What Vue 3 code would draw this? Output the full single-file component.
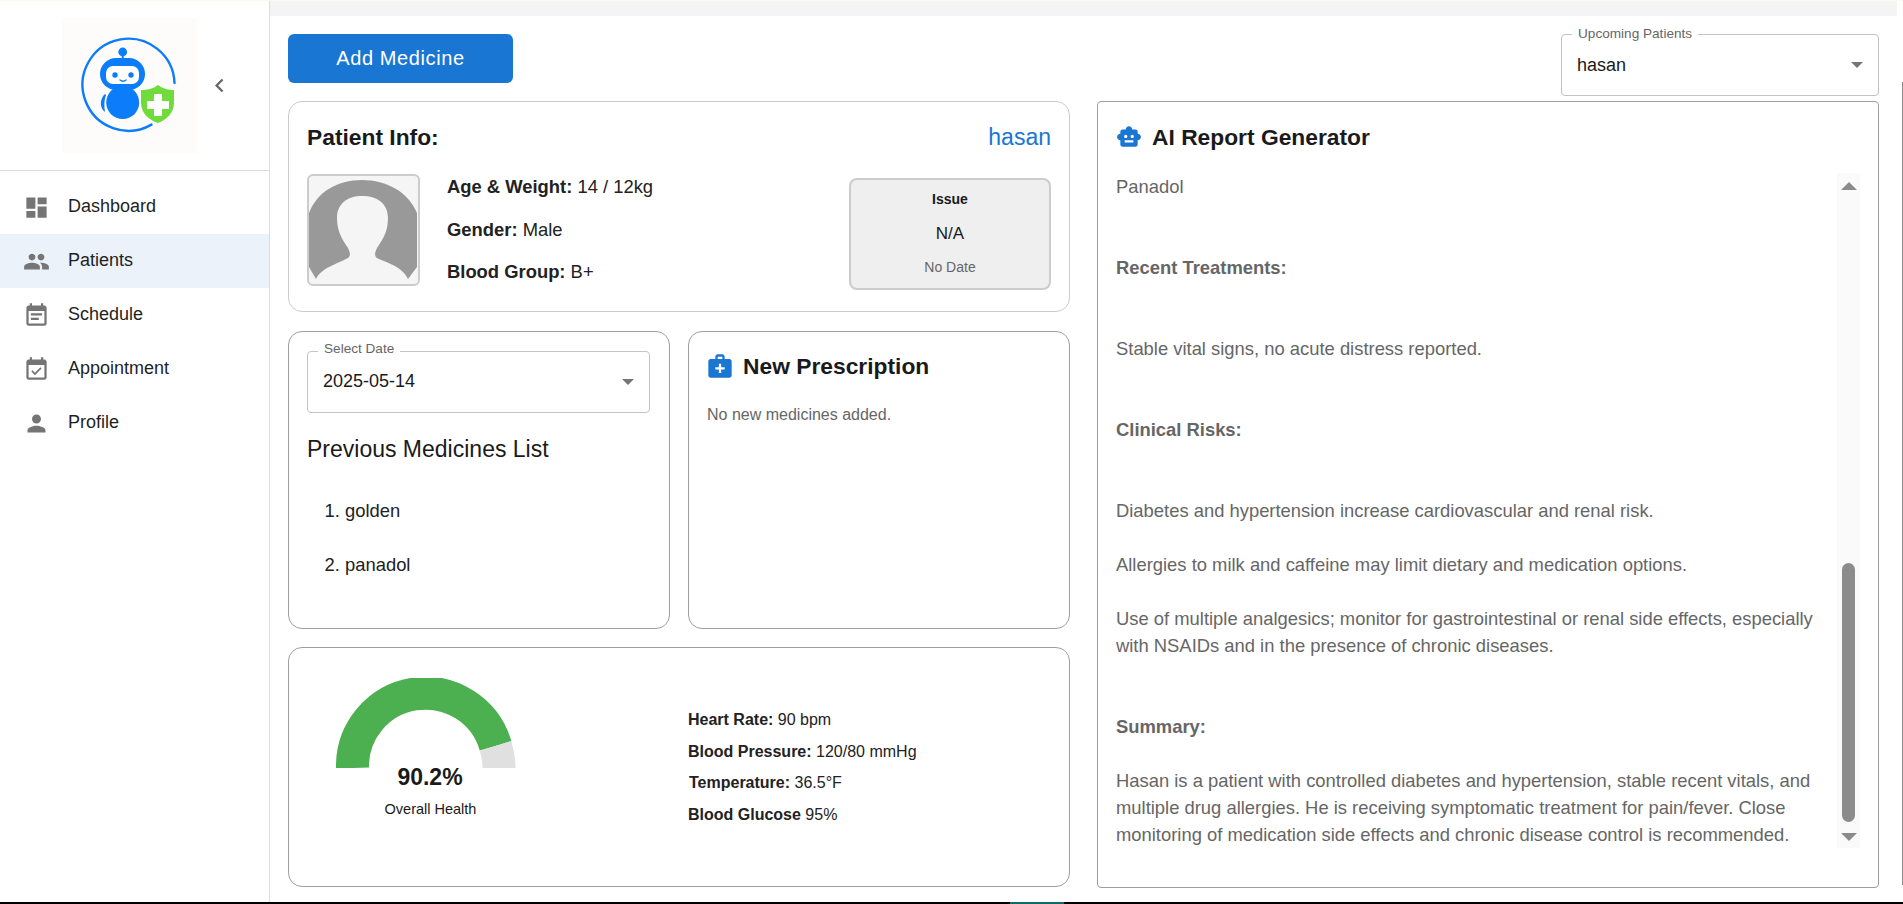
<template>
  <div class="page">
    <div class="top-line"></div>
    <div class="shell">
      <aside class="sidebar">
        <div class="brand">
          <svg class="logo" viewBox="62 18 135 135" width="135" height="135">
            <rect x="62" y="18" width="135" height="135" fill="#fdfcfa" />
            <path d="M151.5 124.6 A46 46 0 1 1 174.5 83" fill="none" stroke="#0b7cfa" stroke-width="2.4" stroke-linecap="round" />
            <circle cx="122.7" cy="52" r="4.4" fill="#0b7cfa" />
            <rect x="121.7" y="54" width="2" height="8" fill="#0b7cfa" />
            <rect x="100" y="58" width="45" height="32" rx="16" fill="#0b7cfa" />
            <circle cx="122.7" cy="102.5" r="16.5" fill="#0b7cfa" />
            <path d="M105 94 C100 98 99 108 105 112 C104 106 104 100 106 95 Z" fill="#0b7cfa" />
            <rect x="106" y="66" width="33" height="18" rx="7" fill="#fff" />
            <circle cx="115" cy="75" r="2.7" fill="#0b7cfa" />
            <circle cx="131" cy="75" r="2.7" fill="#0b7cfa" />
            <path d="M120 80 Q123 82.5 126 80" fill="none" stroke="#0b7cfa" stroke-width="1.4" stroke-linecap="round" />
            <path d="M158 85 C163 89 169 90 174 90 L174 103 C174 113 166 120 158 123 C149 120 141 113 141 103 L141 90 C147 90 153 89 158 85 Z" fill="#6fdc3c" />
            <path d="M154 94 h8 v7 h7 v8 h-7 v7 h-8 v-7 h-7 v-8 h7 Z" fill="#fff" />
          </svg>
          <svg class="collapse" viewBox="0 0 24 24" width="27" height="27"><path d="M15.41 7.41 14 6l-6 6 6 6 1.41-1.41L10.83 12z" /></svg>
        </div>
        <nav class="nav">
          <div v-for="item in navItems" :key="item.label" :class="['nav-item', { active: item.label === 'Patients' }]">
            <svg viewBox="0 0 24 24" width="27" height="27"><path :d="item.icon" /></svg>
            <span>{{ item.label }}</span>
          </div>
        </nav>
      </aside>

      <main class="main">
        <div class="top-strip"></div>
        <div class="content">
          <div class="toolbar">
            <button class="btn-add">Add Medicine</button>
            <div class="select upcoming">
              <span class="select-label">Upcoming Patients</span>
              <span class="select-value">hasan</span>
              <span class="caret"></span>
            </div>
          </div>

          <div class="columns">
            <div class="left-col">
              <section class="card patient-card">
                <div class="patient-head">
                  <h2>Patient Info:</h2>
                  <span class="patient-name">hasan</span>
                </div>
                <div class="patient-body">
                  <div class="avatar">
                    <svg viewBox="0 0 109 108" width="109" height="108">
                      <path d="M0 37 C8 16 28 4 53 4 C78 4 99 16 108 37 L108 91 L99 103 L7 103 L0 91 Z" fill="#999" />
                      <path d="M7 103 C12 92 28 88 39 82 C42 80 41 76 39 72 C32 62 28 54 28 42 C28 28 38 20 53 20 C69 20 79 28 79 42 C79 54 75 62 68 72 C66 76 65 80 68 82 C78 87 93 90 99 103 L99 108 L7 108 Z" fill="#f5f5f5" />
                    </svg>
                  </div>
                  <div class="patient-details">
                    <p><b>Age &amp; Weight:</b> 14 / 12kg</p>
                    <p><b>Gender:</b> Male</p>
                    <p><b>Blood Group:</b> B+</p>
                  </div>
                  <div class="issue-box">
                    <div class="issue-title">Issue</div>
                    <div class="issue-value">N/A</div>
                    <div class="issue-date">No Date</div>
                  </div>
                </div>
              </section>

              <div class="middle-row">
                <section class="card dark date-card">
                  <div class="select date-select">
                    <span class="select-label">Select Date</span>
                    <span class="select-value">2025-05-14</span>
                    <span class="caret"></span>
                  </div>
                  <h3>Previous Medicines List</h3>
                  <ol class="med-list">
                    <li>golden</li>
                    <li>panadol</li>
                  </ol>
                </section>
                <section class="card dark rx-card">
                  <div class="rx-head">
                    <svg viewBox="0 0 24 24" width="28" height="28"><path d="M20 6h-4V4c0-1.1-.9-2-2-2h-4c-1.1 0-2 .9-2 2v2H4c-1.1 0-2 .9-2 2v12c0 1.1.9 2 2 2h16c1.1 0 2-.9 2-2V8c0-1.1-.9-2-2-2zM10 4h4v2h-4V4zm6 11h-3v3h-2v-3H8v-2h3v-3h2v3h3v2z" /></svg>
                    <h2>New Prescription</h2>
                  </div>
                  <p class="rx-empty">No new medicines added.</p>
                </section>
              </div>

              <section class="card dark health-card">
                <div class="gauge">
                  <svg viewBox="0 0 180 90" width="180" height="90">
                    <path d="M16.5 90 A73 73 0 0 1 159.6 67.9" fill="none" stroke="#4caf50" stroke-width="33" />
                    <path d="M159.6 67.9 A73 73 0 0 1 163 90" fill="none" stroke="#e0e0e0" stroke-width="33" />
                  </svg>
                  <div class="gauge-value">90.2%</div>
                  <div class="gauge-label">Overall Health</div>
                </div>
                <div class="vitals">
                  <p v-for="v in vitals" :key="v.label"><b>{{ v.label }}</b> {{ v.value }}</p>
                </div>
              </section>
            </div>

            <section class="card dark ai-card">
              <div class="ai-head">
                <svg viewBox="0 0 24 24" width="26" height="26"><path d="M20 9V7c0-1.1-.9-2-2-2h-3c0-1.66-1.34-3-3-3S9 3.34 9 5H6c-1.1 0-2 .9-2 2v2c-1.66 0-3 1.34-3 3s1.34 3 3 3v4c0 1.1.9 2 2 2h12c1.1 0 2-.9 2-2v-4c1.66 0 3-1.34 3-3s-1.34-3-3-3zM7.5 11.5c0-.83.67-1.5 1.5-1.5s1.5.67 1.5 1.5S9.83 13 9 13s-1.5-.67-1.5-1.5zM16 17H8v-2h8v2zm-1-4c-.83 0-1.5-.67-1.5-1.5S14.17 10 15 10s1.5.67 1.5 1.5S15.83 13 15 13z" /></svg>
                <h2>AI Report Generator</h2>
              </div>
              <div class="ai-body">
                <div class="ai-text">
                  <p v-for="(line, i) in report" :key="i" :class="[line.gap, { heading: line.heading }]">{{ line.text }}</p>
                </div>
                <div class="scrollbar">
                  <span class="arrow up"></span>
                  <span class="thumb"></span>
                  <span class="arrow down"></span>
                </div>
              </div>
            </section>
          </div>
        </div>
      </main>
    </div>
    <div class="bottom-bar"><span class="bottom-accent"></span></div>
    <span class="page-rail"></span>
  </div>
</template>

<script setup>
const navItems = [
  { label: 'Dashboard', icon: 'M3 13h8V3H3v10zm0 8h8v-6H3v6zm10 0h8V11h-8v10zm0-18v6h8V3h-8z' },
  { label: 'Patients', icon: 'M16 11c1.66 0 2.99-1.34 2.99-3S17.66 5 16 5c-1.66 0-3 1.34-3 3s1.34 3 3 3zm-8 0c1.66 0 2.99-1.34 2.99-3S9.66 5 8 5C6.34 5 5 6.34 5 8s1.34 3 3 3zm0 2c-2.33 0-7 1.17-7 3.5V19h14v-2.5c0-2.33-4.67-3.5-7-3.5zm8 0c-.29 0-.62.02-.97.05 1.16.84 1.97 1.97 1.97 3.45V19h6v-2.5c0-2.33-4.67-3.5-7-3.5z' },
  { label: 'Schedule', icon: 'M17 10H7v2h10v-2zm2-7h-1V1h-2v2H8V1H6v2H5c-1.11 0-1.99.9-1.99 2L3 19c0 1.1.89 2 2 2h14c1.1 0 2-.9 2-2V5c0-1.1-.9-2-2-2zm0 16H5V8h14v11zm-5-5H7v2h7v-2z' },
  { label: 'Appointment', icon: 'M16.53 11.06L15.47 10l-4.88 4.88-2.12-2.12-1.06 1.06L10.59 17l5.94-5.94zM19 3h-1V1h-2v2H8V1H6v2H5c-1.11 0-1.99.9-1.99 2L3 19c0 1.1.89 2 2 2h14c1.1 0 2-.9 2-2V5c0-1.1-.9-2-2-2zm0 16H5V8h14v11z' },
  { label: 'Profile', icon: 'M12 12c2.21 0 4-1.79 4-4s-1.79-4-4-4-4 1.79-4 4 1.79 4 4 4zm0 2c-2.67 0-8 1.34-8 4v2h16v-2c0-2.66-5.33-4-8-4z' },
]

const vitals = [
  { label: 'Heart Rate:', value: '90 bpm' },
  { label: 'Blood Pressure:', value: '120/80 mmHg' },
  { label: 'Temperature:', value: '36.5°F' },
  { label: 'Blood Glucose', value: '95%' },
]

const report = [
  { text: 'Panadol', gap: 'gap-2' },
  { text: 'Recent Treatments:', gap: 'gap-2', heading: true },
  { text: 'Stable vital signs, no acute distress reported.', gap: 'gap-2' },
  { text: 'Clinical Risks:', gap: 'gap-2', heading: true },
  { text: 'Diabetes and hypertension increase cardiovascular and renal risk.', gap: 'gap-1' },
  { text: 'Allergies to milk and caffeine may limit dietary and medication options.', gap: 'gap-1' },
  { text: 'Use of multiple analgesics; monitor for gastrointestinal or renal side effects, especially with NSAIDs and in the presence of chronic diseases.', gap: 'gap-2' },
  { text: 'Summary:', gap: 'gap-1', heading: true },
  { text: 'Hasan is a patient with controlled diabetes and hypertension, stable recent vitals, and multiple drug allergies. He is receiving symptomatic treatment for pain/fever. Close monitoring of medication side effects and chronic disease control is recommended.', gap: 'gap-0' },
]
</script>

<style>
html, body { margin: 0; background: #fff; overflow: hidden; }
</style>

<style scoped>
.page { position: relative; width: 1903px; height: 904px; display: flex; flex-direction: column; overflow: hidden; font-family: "Liberation Sans", Arial, sans-serif; color: #1a1a1a; background: #fff; }
.top-line { height: 1px; background: #fff8ec; flex: none; }
.shell { flex: 1; display: flex; min-height: 0; }
.bottom-bar { height: 2px; background: #000; flex: none; padding-left: 1010px; }
.bottom-accent { display: block; width: 54px; height: 2px; background: #0f6b66; }
.page-rail { position: absolute; right: 0; top: 82px; width: 1px; height: 803px; background: #8b8b8b; }

.sidebar { width: 269px; flex: none; border-right: 1px solid #ddd; }
.brand { box-sizing: content-box; height: 152px; border-bottom: 1px solid #ddd; display: flex; align-items: flex-start; padding: 17px 0 0 62px; }
.logo { display: block; flex: none; }
.collapse { fill: #666; margin: 54px 0 0 9px; flex: none; }
.nav { padding-top: 9px; }
.nav-item { height: 54px; display: flex; align-items: center; gap: 18px; padding-left: 23px; font-size: 18px; color: #1f1f1f; }
.nav-item span { margin-top: -2px; }
.nav-item svg { fill: #757575; flex: none; }
.nav-item.active { background: #ebf2fa; }

.main { flex: 1; min-width: 0; }
.top-strip { height: 15px; background: #f4f4f4; margin-right: 6px; }
.content { padding: 18px 24px 0 18px; }
.toolbar { display: flex; justify-content: space-between; align-items: flex-start; height: 62px; margin-bottom: 5px; }
.btn-add { width: 225px; height: 49px; background: #1976d2; color: #fff; border: none; border-radius: 6px; font-family: inherit; font-size: 20px; letter-spacing: 0.6px; cursor: pointer; }

.select { position: relative; box-sizing: border-box; border: 1px solid #c4c4c4; border-radius: 4px; display: flex; align-items: center; padding: 0 15px; font-size: 18px; }
.upcoming { width: 318px; height: 62px; }
.date-select { height: 62px; padding-bottom: 2px; }
.select-label { position: absolute; top: -9px; left: 10px; padding: 0 6px; background: #fff; font-size: 13.6px; line-height: 15px; color: #666; }
.date-select .select-label { top: -11px; }
.caret { position: absolute; right: 15px; top: 50%; margin-top: -3px; border-left: 6px solid transparent; border-right: 6px solid transparent; border-top: 6px solid #757575; }

.columns { display: grid; grid-template-columns: 782px 782px; gap: 27px; }
.left-col { display: flex; flex-direction: column; gap: 19px; }
.card { box-sizing: border-box; border: 1px solid #ccc; border-radius: 14px; background: #fff; }
.card.dark { border-color: #9e9e9e; }

h2 { margin: 0; font-size: 22.8px; line-height: 28px; font-weight: 700; color: #1a1a1a; }
h3 { margin: 0; font-size: 23px; font-weight: 400; line-height: 28px; color: #1a1a1a; }

.patient-card { height: 211px; padding: 21px 18px 0; }
.patient-head { display: flex; justify-content: space-between; align-items: center; height: 28px; }
.patient-name { font-size: 23px; color: #1976d2; }
.patient-body { display: flex; margin-top: 23px; position: relative; }
.avatar { box-sizing: border-box; width: 113px; height: 112px; border: 2px solid #ccc; border-radius: 6px; background: #f5f5f5; overflow: hidden; flex: none; }
.avatar svg { display: block; }
.patient-details { margin-left: 27px; flex: 1; font-size: 18.4px; padding-top: 4px; }
.patient-details p { margin: 0 0 24.5px; line-height: 18px; color: #222; }
.issue-box { box-sizing: border-box; width: 202px; height: 112px; margin-top: 4px; border: 2px solid #ccc; border-radius: 8px; background: #efefef; text-align: center; flex: none; }
.issue-title { font-size: 14px; font-weight: 700; margin-top: 11px; line-height: 16px; }
.issue-value { font-size: 17px; margin-top: 17px; line-height: 20px; }
.issue-date { font-size: 14px; color: #666; margin-top: 15px; line-height: 16px; }

.middle-row { display: grid; grid-template-columns: 382px 382px; gap: 18px; }
.date-card, .rx-card { height: 298px; }
.date-card { padding: 19px 19px 0 18px; }
.date-card h3 { margin-top: 22px; }
.med-list { margin: 39px 0 0; padding: 0 0 0 38px; font-size: 18.4px; }
.med-list li { line-height: 18px; margin-bottom: 36px; color: #222; }
.rx-card { padding: 20px 18px 0; }
.rx-head { display: flex; align-items: center; gap: 9px; height: 28px; margin-left: -1px; }
.rx-head svg, .ai-head svg { fill: #1976d2; flex: none; }
.rx-empty { margin: 26px 0 0; font-size: 16px; color: #666; }

.health-card { height: 240px; margin-top: -1px; display: flex; }
.gauge { width: 180px; margin: 30px 0 0 47px; flex: none; }
.gauge svg { display: block; }
.gauge-value { font-size: 23px; font-weight: 700; text-align: center; line-height: 28px; margin-top: -5px; padding-left: 8px; }
.gauge-label { font-size: 14.5px; text-align: center; margin-top: 9.5px; line-height: 16px; padding-left: 9px; white-space: nowrap; }
.vitals { margin: 64px 0 0 172px; font-size: 16px; }
.vitals p { margin: 0 0 15.6px; line-height: 16px; color: #222; }
.vitals p:nth-child(3) { margin-left: 1px; }

.ai-card { height: 787px; border-radius: 4px; padding: 21px 18px 0; }
.ai-head { display: flex; align-items: center; gap: 10px; height: 28px; }
.ai-body { display: flex; margin-top: 22px; height: 675px; }
.ai-text { width: 721px; flex: none; font-size: 18.4px; line-height: 27px; color: #666; overflow: hidden; padding-right: 16px; box-sizing: border-box; }
.ai-text p { margin: 0; }
.ai-text .heading { font-weight: 700; }
.gap-0 { margin-bottom: 0 !important; }
.gap-1 { margin-bottom: 27px !important; }
.gap-2 { margin-bottom: 54px !important; }

.scrollbar { position: relative; width: 23px; height: 675px; background: #fafafa; flex: none; }
.thumb { position: absolute; left: 5px; top: 390px; width: 13px; height: 259px; background: #8b8b8b; border-radius: 7px; }
.arrow { position: absolute; left: 4px; width: 0; height: 0; border-left: 8px solid transparent; border-right: 8px solid transparent; }
.arrow.up { top: 9px; border-bottom: 8px solid #8b8b8b; }
.arrow.down { bottom: 7px; border-top: 8px solid #8b8b8b; }
</style>
